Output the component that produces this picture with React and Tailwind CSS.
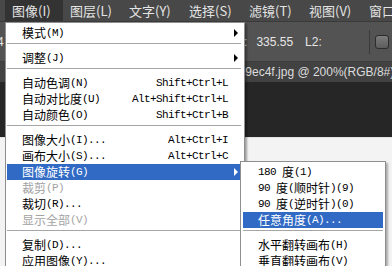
import React from 'react';

const cjk = "font-['Noto_Sans_CJK_SC',sans-serif]";
const mono = "font-['Liberation_Mono',monospace]";

const mainItems = [
    { t: '模式(M)', sub: true },
    'sep',
    { t: '调整(J)', sub: true },
    'sep',
    { t: '自动色调(N)', k: 'Shift+Ctrl+L' },
    { t: '自动对比度(U)', k: 'Alt+Shift+Ctrl+L' },
    { t: '自动颜色(O)', k: 'Shift+Ctrl+B' },
    'sep',
    { t: '图像大小(I)...', k: 'Alt+Ctrl+I' },
    { t: '画布大小(S)...', k: 'Alt+Ctrl+C' },
    { t: '图像旋转(G)', sub: true, active: true },
    { t: '裁剪(P)', off: true },
    { t: '裁切(R)...' },
    { t: '显示全部(V)', off: true },
    'sep',
    { t: '复制(D)...' },
    { t: '应用图像(Y)...' },
];

const subItems = [
    { t: '180 度(1)' },
    { t: '90 度(顺时针)(9)' },
    { t: '90 度(逆时针)(0)' },
    { t: '任意角度(A)...', active: true },
    'sep',
    { t: '水平翻转画布(H)' },
    { t: '垂直翻转画布(V)' },
];

const barItems = [
    { t: '图像(I)', w: 'w-[58px]', open: true },
    { t: '图层(L)', w: 'w-[59px]' },
    { t: '文字(Y)', w: 'w-[60px]' },
    { t: '选择(S)', w: 'w-[60px]' },
    { t: '滤镜(T)', w: 'w-[60px]' },
    { t: '视图(V)', w: 'w-[60px]' },
    { t: '窗口(W)', w: 'w-[60px]' },
];

// SimSun-like: CJK at 12px, latin half-width at 6px
const Label = ({ text }) => (
    <span className="flex items-center whitespace-nowrap">
        {text.split(/([\u4e00-\u9fff]+)/).filter(Boolean).map((part, i) =>
            /[\u4e00-\u9fff]/.test(part)
                ? <span key={i} className={`${cjk} text-[12px] leading-[16px]`}>{part}</span>
                : <span key={i} className={`${mono} text-[11px] tracking-[-0.6px] leading-[16px] whitespace-pre`}>{part}</span>
        )}
    </span>
);

const Arrow = ({ white }) => (
    <span className={`block w-0 h-0 border-y-[4px] border-y-transparent border-l-[4px] ${white ? 'border-l-white' : 'border-l-black'}`} />
);

const Separator = () => (
    <div className="h-[9px] pt-[2px] ml-[1px] mr-[3px]">
        <div className="h-px bg-[#a6a6a6]" />
    </div>
);

const MainMenu = () => (
    <div className="absolute left-[5px] top-[22px] w-[240px] h-[260px] bg-white border border-[#8e8e8e] pt-[2px] shadow-[2px_2px_2px_rgba(0,0,0,0.35)]">
        {mainItems.map((it, i) => it === 'sep' ? <Separator key={i} /> : (
            <div
                key={i}
                className={`flex items-center h-[16px] ml-[1px] mr-[3px] pl-[15px] ${it.active ? 'bg-[#316ac5] text-white' : it.off ? 'text-[#a3a3a3]' : 'text-black'}`}
            >
                <Label text={it.t} />
                {it.k && (
                    <span className={`ml-auto ${mono} text-[11px] tracking-[-0.6px] leading-[16px]`}>{it.k}</span>
                )}
                <span className={`${it.k ? '' : 'ml-auto'} w-[13px] h-full flex items-center pl-[6px]`}>
                    {it.sub && <Arrow white={it.active} />}
                </span>
            </div>
        ))}
    </div>
);

const SubMenu = () => (
    <div className="absolute left-[240px] top-[161px] w-[146px] h-[110px] bg-white border border-[#8e8e8e] pt-[2px] shadow-[2px_2px_2px_rgba(0,0,0,0.3)]">
        {subItems.map((it, i) => it === 'sep' ? (
            <div key={i} className="h-[9px] pt-[2px] mx-[2px]">
                <div className="h-px bg-[#a6a6a6]" />
            </div>
        ) : (
            <div
                key={i}
                className={`flex items-center h-[16px] mx-[2px] pl-[15px] ${it.active ? 'bg-[#316ac5] text-white' : 'text-black'}`}
            >
                <Label text={it.t} />
            </div>
        ))}
    </div>
);

export default function App() {
    return (
        <div className="relative w-[392px] h-[266px] overflow-hidden flex flex-col bg-[#262626] font-['Liberation_Sans',sans-serif]">
            {/* menu bar */}
            <div className="h-[22px] flex items-stretch pl-[5px] bg-[#484848] border-b border-[#3a3a3a] shrink-0">
                {barItems.map((b) => (
                    <div
                        key={b.t}
                        className={`${b.w} shrink-0 pl-[7px] flex items-center ${cjk} text-[13px] text-[#e4e4e4] whitespace-nowrap ${b.open ? 'bg-[#333333]' : ''}`}
                    >
                        {b.t}
                    </div>
                ))}
            </div>

            {/* options bar */}
            <div className="h-[40px] flex items-center bg-[#535353] border-b border-[#3c3c3c] shrink-0 text-[12px] text-[#e6e6e6] whitespace-nowrap">
                <span className="-ml-[3px]">4</span>
                <span className="ml-[227px]">L1:</span>
                <span className="ml-[9px]">335.55</span>
                <span className="ml-[12px]">L2:</span>
                <div className="ml-[47px] w-px h-[24px] bg-[#3a3a3a] shrink-0" />
                <div className="ml-[5px] w-[14px] h-[14px] rounded-[3px] border border-[#2c2c2c] bg-gradient-to-b from-[#7c7c7c] to-[#5c5c5c] shrink-0" />
            </div>

            {/* document tab */}
            <div className="h-[20px] flex items-center bg-[#424242] shrink-0 pl-[232px] text-[12px] text-[#dcdcdc] whitespace-nowrap overflow-hidden">
                3b9ec4f.jpg @ 200%(RGB/8#)
            </div>

            {/* workspace */}
            <div className="h-[55px] bg-[#262626] shrink-0" />

            {/* canvas */}
            <div className="flex-1 bg-[#f3f3f3] border-t border-[#e2e2e2]" />

            <MainMenu />
            <SubMenu />
        </div>
    );
}
